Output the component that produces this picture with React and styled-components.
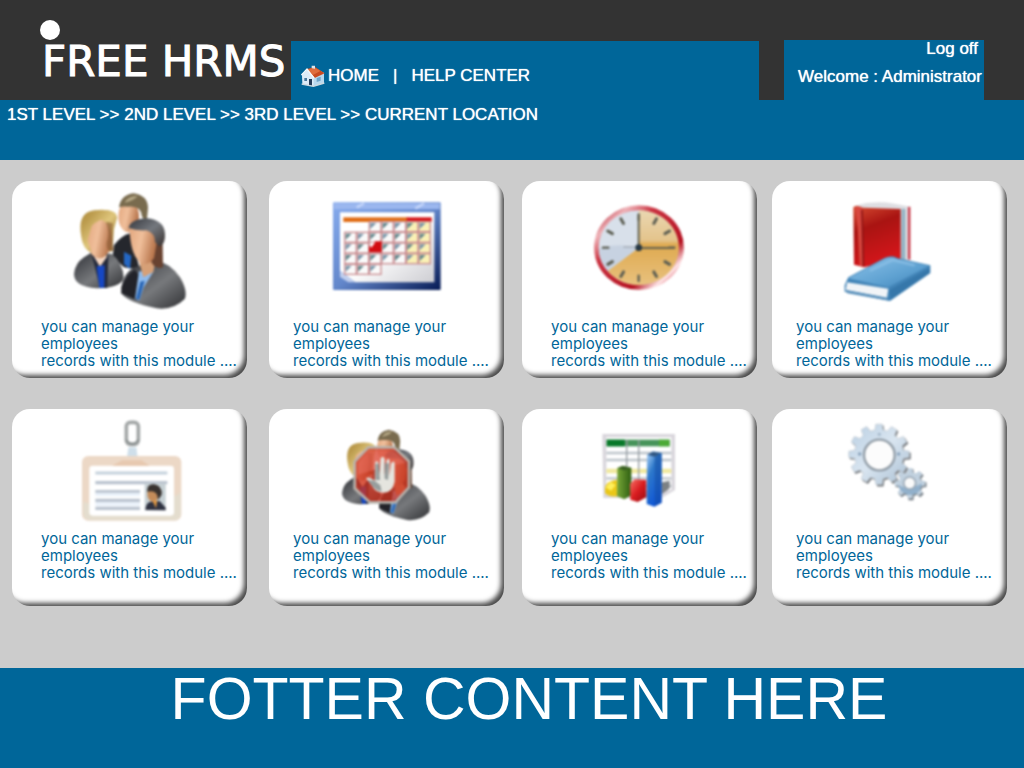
import React from "react";
import styled, { createGlobalStyle } from "styled-components";

const GlobalStyle = createGlobalStyle`
  * { box-sizing: border-box; }
  body {
    margin: 0;
    background: #cccccc;
    font-family: "Liberation Sans", Arial, sans-serif;
    font-size: 17px;
    line-height: 18px;
  }
  a { color: inherit; text-decoration: none; }
`;

const Page = styled.div`
  display: flex;
  flex-direction: column;
  min-height: 100vh;
`;

const Header = styled.header`
  display: flex;
  align-items: flex-end;
  min-height: 100px;
  padding-right: 40px;
  background: #333333;
  color: #ffffff;
`;

const Brand = styled.div`
  align-self: flex-start;
  flex: none;
  width: 291px;
  padding: 20px 0 0 40px;
`;

const BrandDot = styled.div`
  width: 20px;
  height: 20px;
  border-radius: 50%;
  background: #ffffff;
`;

const BrandName = styled.h1`
  margin: 0;
  padding-left: 2px;
  font-family: "DejaVu Sans", sans-serif;
  font-size: 42px;
  font-weight: 400;
  line-height: 44px;
  white-space: nowrap;
  -webkit-text-stroke: 1px #ffffff;
`;

const MainNav = styled.nav`
  display: flex;
  flex: 1;
  align-items: center;
  gap: 14px;
  height: 59px;
  padding: 10px 10px 0;
  background: #006699;
  text-shadow: 0 0 1px #ffffff;
  white-space: nowrap;
`;

const NavLink = styled.a`
  display: flex;
  align-items: center;
  gap: 3px;
`;

const HomeGlyph = styled.svg`
  width: 24px;
  height: 22px;
`;

const UserPanel = styled.div`
  display: flex;
  flex-direction: column;
  align-items: flex-end;
  gap: 10px;
  width: 200px;
  height: 60px;
  margin-left: 25px;
  padding-right: 2px;
  background: #006699;
  text-shadow: 0 0 1px #ffffff;
  white-space: nowrap;
`;

const LogOff = styled.a`
  padding-right: 4px;
`;

const Breadcrumb = styled.nav`
  min-height: 60px;
  padding: 6px 7px;
  background: #006699;
  color: #ffffff;
  text-shadow: 0 0 1px #ffffff;
`;

const Modules = styled.main`
  display: grid;
  flex: 1;
  grid-template-columns: 257fr 253fr 250fr 252fr;
  align-content: start;
  row-gap: 31px;
  padding: 21px 0 31px 12px;
`;

const Card = styled.a`
  display: flex;
  flex-direction: column;
  width: 235px;
  min-height: 197px;
  border-radius: 18px;
  background: #ffffff;
  box-shadow: inset -5px -5px 5px -2px #4a4a4a;
`;

const Picture = styled.svg`
  align-self: center;
  width: 131px;
  height: ${(p) => (p.$tall ? 137 : 121)}px;
  filter: blur(1px);
`;

const Description = styled.p`
  margin: 0;
  padding-left: ${(p) => (p.$wide ? 29 : 24)}px;
  color: #006699;
  font-family: Inter, sans-serif;
  font-size: 15px;
  line-height: 17px;
  white-space: nowrap;
`;

const Footer = styled.footer`
  min-height: 100px;
  padding-left: 34px;
  background: #006699;
  color: #ffffff;
  font-size: 59px;
  line-height: 62px;
  text-align: center;
`;

function HomeIcon() {
  return (
    <HomeGlyph viewBox="902 192 72 66" aria-hidden="true">
      <path d="M906 219 L939 198 L971 216 L971 246 L943 255 L907 250Z" fill="#eef4fa" />
      <path d="M939 228 L971 216 V246 L939 255Z" fill="#b9d8ee" />
      <path d="M905 222 L921 204 L939 228 V255 L907 250Z" fill="#dcebf7" />
      <path d="M920 204 L944 198 L973 217 L943 231Z" fill="#c94a20" />
      <path d="M922 205 L944 200 L960 210 L938 222Z" fill="#df6d3d" />
      <path d="M903 222 L920 204 L942 232" fill="none" stroke="#f7fafc" strokeWidth="4" />
      <path d="M934 202 V194 H944 V203" fill="#dbe3ea" />
      <path d="M926 234 h9 v20 l-9 -1z" fill="#243a58" />
      <path d="M912 231 h8 v9 h-8z" fill="#47789d" />
      <path d="M949 231 l12 -4 v12 l-12 4z" fill="#6fa5c9" />
      <path d="M904 249 L939 256 L972 246" fill="none" stroke="#cbd8df" strokeWidth="4" />
    </HomeGlyph>
  );
}

function PeopleShapes({ id }) {
  return (
    <>
      <defs>
        <linearGradient id={id + "suit"} x1="0" y1="0" x2="1" y2="1">
          <stop offset="0" stopColor="#2b2d33" />
          <stop offset="0.55" stopColor="#77797c" />
          <stop offset="1" stopColor="#303134" />
        </linearGradient>
        <linearGradient id={id + "skin"} x1="0" y1="0" x2="1" y2="0.3">
          <stop offset="0" stopColor="#e2a67d" />
          <stop offset="0.5" stopColor="#f0bf9b" />
          <stop offset="1" stopColor="#b9774e" />
        </linearGradient>
        <linearGradient id={id + "blond"} x1="0" y1="0" x2="1" y2="1">
          <stop offset="0" stopColor="#a78332" />
          <stop offset="0.5" stopColor="#dfc67c" />
          <stop offset="1" stopColor="#8a6626" />
        </linearGradient>
        <linearGradient id={id + "dark"} x1="0" y1="0" x2="1" y2="1">
          <stop offset="0" stopColor="#34363c" />
          <stop offset="0.5" stopColor="#74787e" />
          <stop offset="1" stopColor="#38302d" />
        </linearGradient>
      </defs>
      <path d="M342 225 Q366 195 392 190 L420 300 L372 292 L338 260Z" fill="#25272d" />
      <path d="M372 245 l22 12 -4 40 -18 -14z" fill="#2467c4" />
      <ellipse cx="386" cy="140" rx="31" ry="47" fill={`url(#${id}skin)`} />
      <path d="M357 112 Q362 75 401 70 Q444 77 444 114 L440 157 L426 140 Q424 106 384 110 Q370 108 357 112Z" fill="#796b4e" />
      <path d="M374 98 Q384 76 413 78 Q402 92 374 98Z" fill="#b4a785" />
      <path d="M222 312 Q225 280 252 262 L280 244 L336 252 Q369 280 371 322 Q366 354 290 355 Q222 350 222 312Z" fill={`url(#${id}suit)`} />
      <path d="M276 257 L325 258 L322 354 L300 354Z" fill="#252a3a" />
      <path d="M282 260 L300 290 L321 260 L311 247Z" fill="#f4d7c2" />
      <path d="M290 289 L314 286 L313 353 L298 353Z" fill="#1647c4" />
      <path d="M244 202 Q230 128 282 121 Q340 113 352 142 L342 178 L337 244 L274 250 Q248 235 244 202Z" fill={`url(#${id}blond)`} />
      <ellipse cx="298" cy="207" rx="37" ry="58" fill={`url(#${id}skin)`} />
      <path d="M246 184 Q250 123 326 121 Q354 126 350 145 Q302 139 275 168 L263 211 L275 249 Q249 231 246 184Z" fill={`url(#${id}blond)`} />
      <path d="M338 160 Q334 205 342 241 Q318 249 320 218 Q331 189 318 155Z" fill="#8a5c35" opacity=".65" />
      <path d="M364 352 Q370 310 400 294 L465 270 Q511 279 541 323 Q564 363 554 387 Q520 421 470 415 Q384 398 364 370Z" fill={`url(#${id}suit)`} />
      <path d="M365 350 Q382 311 405 300 L420 321 L411 391 L364 370Z" fill="#222329" />
      <path d="M417 304 L461 304 L431 352 L418 391 L405 386Z" fill="#8fbbed" />
      <path d="M421 335 L434 332 L418 389 L408 386Z" fill="#2b67b5" />
      <path d="M417 273 L468 265 L460 306 L430 322Z" fill="#d6a077" />
      <path d="M456 172 Q488 190 488 221 L489 292 Q463 300 452 271Z" fill="#684230" />
      <path d="M388 166 Q414 151 448 168 L471 212 L462 264 Q444 290 423 278 Q390 258 388 166Z" fill={`url(#${id}skin)`} />
      <path d="M386 174 Q391 148 440 145 Q493 150 495 191 Q497 220 479 230 L465 216 Q466 190 439 181 Q409 183 386 174Z" fill={`url(#${id}dark)`} />
    </>
  );
}

function EmployeesIcon() {
  return (
    <Picture $tall viewBox="192 33 393 411" aria-hidden="true">
      <PeopleShapes id="emp" />
    </Picture>
  );
}

function CalendarIcon() {
  const cells = [];
  for (let row = 0; row < 5; row += 1) {
    for (let col = 0; col < 7; col += 1) {
      if ((row === 0 && col < 2) || (row === 4 && col > 2)) continue;
      cells.push([254 + col * 37, 155 + row * 32, row, col]);
    }
  }
  return (
    <Picture $tall viewBox="183 33 393 411" aria-hidden="true">
      <defs>
        <linearGradient id="calFrame" x1="0" y1="0" x2="1" y2="1">
          <stop offset="0" stopColor="#86abed" />
          <stop offset="0.5" stopColor="#6387cb" />
          <stop offset="1" stopColor="#071b55" />
        </linearGradient>
        <linearGradient id="calPaper" x1="0" y1="0" x2="1" y2="1">
          <stop offset="0.5" stopColor="#ffffff" />
          <stop offset="1" stopColor="#cdcdd2" />
        </linearGradient>
      </defs>
      <rect x="219" y="97" width="323" height="263" rx="3" fill="url(#calFrame)" />
      <path d="M222 100 H539 V118 H222Z" fill="#9bb7ef" />
      <path d="M290 112 l22 -12 M466 116 l26 -16" stroke="#c3d5fa" strokeWidth="8" />
      <path d="M240 127 H523 V337 H286 L240 302Z" fill="url(#calPaper)" />
      <path d="M240 302 L286 337 H265 L240 321Z" fill="#c0ceed" />
      <rect x="250" y="142" width="194" height="14" fill="#e06c15" />
      <rect x="440" y="142" width="75" height="14" fill="#d51518" />
      {cells.map(([x, y, row, col]) => (
        <g key={x + "-" + y}>
          <rect x={x} y={y} width="35" height="30" fill={col > 4 ? "#faf1b5" : "#fafafa"} stroke="#c98d91" strokeWidth="4" />
          <path d={`M${x + 3} ${y + 4} h18 l-18 18z`} fill={(row + col) % 2 ? "#64878c" : "#7895a8"} />
        </g>
      ))}
      <path d="M327 231 L345 214 H365 V247 H327Z" fill="#d20c10" />
      <path d="M329 220 l17 -3 -13 17z" fill="#ffffff" />
    </Picture>
  );
}

function ClockIcon() {
  const ticks = Array.from({ length: 12 }, (_, i) => {
    const a = (i * Math.PI) / 6;
    return [371 + 91 * Math.sin(a), 233 - 84 * Math.cos(a), 371 + 107 * Math.sin(a), 233 - 100 * Math.cos(a)];
  });
  return (
    <Picture $tall viewBox="177 33 393 411" aria-hidden="true">
      <defs>
        <linearGradient id="clockRim" x1="0" y1="0" x2="1" y2="1">
          <stop offset="0.05" stopColor="#a90e20" />
          <stop offset="0.2" stopColor="#efb4b9" />
          <stop offset="0.35" stopColor="#ca3341" />
          <stop offset="0.7" stopColor="#b51222" />
          <stop offset="0.82" stopColor="#ffe7e8" />
          <stop offset="0.92" stopColor="#ca2735" />
        </linearGradient>
        <linearGradient id="clockGold" x1="0" y1="0" x2="0" y2="1">
          <stop offset="0" stopColor="#ead7b1" />
          <stop offset="0.4" stopColor="#e4c48c" />
          <stop offset="0.46" stopColor="#dfaa50" />
          <stop offset="1" stopColor="#e8c17e" />
        </linearGradient>
      </defs>
      <ellipse cx="372" cy="233" rx="135" ry="127" fill="url(#clockRim)" />
      <ellipse cx="371" cy="233" rx="120" ry="112" fill="#d8e0ea" />
      <path d="M371 233 V121 A120 112 0 1 1 278 303Z" fill="url(#clockGold)" />
      <path d="M252 235 Q310 217 371 233 L278 303 Q251 276 252 235Z" fill="#bfcbdc" opacity=".65" />
      {ticks.map(([x1, y1, x2, y2], i) => (
        <line key={i} x1={x1} y1={y1} x2={x2} y2={y2} stroke="#5c5e52" strokeWidth={i % 3 ? 9 : 7} strokeLinecap="round" />
      ))}
      <path d="M371 137 V234 H477" fill="none" stroke="#64624e" strokeWidth="6" />
      <path d="M325 231 H371" stroke="#a4abb4" strokeWidth="4" />
      <circle cx="371" cy="233" r="10" fill="#253744" />
    </Picture>
  );
}

function BooksIcon() {
  return (
    <Picture $tall viewBox="177 33 393 411" aria-hidden="true">
      <defs>
        <linearGradient id="bookRed" x1="0" y1="0" x2="0.3" y2="1">
          <stop offset="0" stopColor="#d64c31" />
          <stop offset="0.4" stopColor="#a91412" />
          <stop offset="1" stopColor="#d4161b" />
        </linearGradient>
        <linearGradient id="bookBlue" x1="0" y1="0" x2="1" y2="1">
          <stop offset="0" stopColor="#8cc2e9" />
          <stop offset="0.6" stopColor="#5ea1d1" />
          <stop offset="1" stopColor="#3e80b5" />
        </linearGradient>
      </defs>
      <path d="M268 107 Q330 90 388 101 L436 110 V270 L405 279 L285 126Z" fill="#dedee2" />
      <path d="M410 116 L421 117 V275 L408 276Z" fill="#92b2c3" />
      <path d="M429 111 L436 110 V270 L429 267Z" fill="#ca3545" />
      <path d="M265 112 Q274 104 294 113 L407 117 V268 L297 292 L267 284Z" fill="url(#bookRed)" />
      <path d="M270 112 Q281 107 292 115 L296 289 L284 288 L278 171Z" fill="#d8473f" />
      <path d="M291 119 L295 289" stroke="#8d1516" strokeWidth="5" />
      <path d="M239 345 L250 322 L358 264 Q382 254 397 264 L496 286 V309 L375 393 L239 365Z" fill="#4284b7" />
      <path d="M250 325 L358 266 Q377 258 396 266 L492 287 L370 352Z" fill="url(#bookBlue)" />
      <path d="M246 337 L370 356 L366 383 L242 360Z" fill="#f1f4f7" />
      <path d="M240 359 L363 384 L372 392 L247 370Z" fill="#5b91bb" />
      <path d="M374 360 L494 294 V310 L376 389Z" fill="#3677aa" />
      <path d="M315 302 L383 270 L449 286" fill="none" stroke="#a4d0ef" strokeWidth="8" opacity=".4" />
    </Picture>
  );
}

function BadgeIcon() {
  return (
    <Picture viewBox="192 27 393 363" aria-hidden="true">
      <rect x="379" y="67" width="36" height="66" rx="12" fill="#ffffff" stroke="#a3a7a7" strokeWidth="11" />
      <path d="M379 120 Q397 143 415 120" fill="none" stroke="#868c8c" strokeWidth="5" />
      <path d="M385 142 h24 l4 31 h-32z" fill="#cfdfea" />
      <rect x="246" y="168" width="298" height="194" rx="19" fill="#ecd8c6" />
      <path d="M250 305 Q400 360 542 278 V344 Q538 360 523 360 H264 Q250 355 250 338Z" fill="#e2dfd0" opacity=".75" />
      <rect x="268" y="197" width="254" height="150" rx="10" fill="#ffffff" />
      <path d="M336 198 L366 181 H425 L449 198Z" fill="#e7c9b0" />
      <path d="M286 219 H502" stroke="#c5d2dc" strokeWidth="9" />
      <path d="M286 248 H502 M286 275 H420 M286 301 H420 M286 325 H420" stroke="#bac3cf" strokeWidth="10" />
      <path d="M286 283 H420 M286 312 H420" stroke="#e9f1fa" strokeWidth="10" />
      <rect x="434" y="250" width="63" height="81" fill="#c6d0d4" />
      <path d="M436 330 Q438 303 460 305 L479 303 L497 323 V331Z" fill="#303342" />
      <ellipse cx="459" cy="281" rx="17" ry="25" fill="#c48c5a" />
      <path d="M441 275 Q441 250 463 253 Q487 257 485 284 L474 301 Q475 268 441 275Z" fill="#38322f" />
      <path d="M458 303 l13 -2 -3 24z" fill="#e59b43" />
    </Picture>
  );
}

function BlockedIcon() {
  return (
    <Picture viewBox="183 27 393 363" aria-hidden="true">
      <g transform="translate(72 34) scale(.785)">
        <PeopleShapes id="blk" />
      </g>
      <path d="M325 142 H403 L447 184 V262 L406 307 H329 L284 265 V185Z" fill="#d0331f" fillOpacity=".76" stroke="#b8b2ab" strokeWidth="8" />
      <path d="M326 151 H400 L438 188 Q370 200 294 224 V189Z" fill="#ef7f72" opacity=".38" />
      <path d="M318 235 Q324 227 344 242 L345 191 Q348 176 356 190 L358 226 L362 175 Q369 164 374 177 V225 L380 181 Q388 170 389 185 V228 L393 191 Q402 178 404 192 V245 Q397 278 371 278 Q346 278 336 257Z" fill="#e5e5df" />
      <path d="M344 242 L361 256 L365 274 Q348 272 336 257 L323 240Z M374 190 V236 L384 240 L388 190Z M346 192 L356 190 L360 240 L346 240Z" fill="#7c8587" opacity=".75" />
    </Picture>
  );
}

function ReportIcon() {
  return (
    <Picture viewBox="177 27 393 363" aria-hidden="true">
      <defs>
        <linearGradient id="barGreen" x1="0" y1="0" x2="1" y2="0">
          <stop offset="0" stopColor="#78a738" />
          <stop offset="1" stopColor="#2d5d10" />
        </linearGradient>
        <linearGradient id="barBlue" x1="0" y1="0" x2="0.6" y2="1">
          <stop offset="0" stopColor="#b7dafa" />
          <stop offset="0.4" stopColor="#2e79cb" />
          <stop offset="1" stopColor="#0b51d6" />
        </linearGradient>
        <linearGradient id="barRed" x1="0" y1="0" x2="1" y2="1">
          <stop offset="0" stopColor="#f57467" />
          <stop offset="0.5" stopColor="#d91c20" />
          <stop offset="1" stopColor="#960c12" />
        </linearGradient>
      </defs>
      <path d="M262 102 H480 V270 L440 294 H265Z" fill="#d9d6dc" />
      <path d="M274 112 H469 V270 H274Z" fill="#ffffff" />
      <rect x="275" y="119" width="189" height="20" fill="#47945a" />
      <rect x="275" y="119" width="54" height="20" fill="#087929" />
      <path d="M432 119 h32 v20 h-32z" fill="#4caa36" />
      <path d="M274 159 H469 M274 180 H469 M274 235 H469 M274 258 H469" stroke="#bdc4ca" strokeWidth="7" />
      <path d="M274 213 H469" stroke="#f0e99f" strokeWidth="14" />
      <path d="M335 119 V270 M371 119 V270" stroke="#949ba0" strokeWidth="4" />
      <path d="M270 263 Q275 242 306 239 V289 Q285 292 270 280Z" fill="#eac719" />
      <path d="M272 262 L287 246 L302 255 L288 272Z" fill="#fff05c" />
      <path d="M307 204 L323 197 L349 203 V286 L328 298 L306 289Z" fill="url(#barGreen)" />
      <path d="M308 204 L324 198 L347 204 L328 211Z" fill="#375d22" />
      <path d="M345 251 L359 238 L394 240 V292 L368 306 L346 299Z" fill="url(#barRed)" />
      <path d="M441 247 L464 242 V265 L441 282Z" fill="#7c8184" />
      <path d="M396 164 L414 154 L440 159 V308 L418 320 L395 312Z" fill="url(#barBlue)" />
      <path d="M419 170 L440 159 V308 L419 319Z" fill="#174f9f" opacity=".5" />
      <path d="M397 164 L414 155 L438 160 L419 170Z" fill="#315782" />
    </Picture>
  );
}

function gearPath(cx, cy, outer, inner, teeth) {
  const step = (Math.PI * 2) / teeth;
  const points = [];
  for (let i = 0; i < teeth; i += 1) {
    const base = i * step - Math.PI / 2;
    [[-0.32, inner], [-0.2, outer], [0.2, outer], [0.32, inner]].forEach(([f, r]) => {
      points.push(`${cx + r * Math.cos(base + f * step)} ${cy + r * Math.sin(base + f * step)}`);
    });
  }
  return `M${points.join(" L")}Z`;
}

function GearsIcon() {
  return (
    <Picture viewBox="177 27 393 363" aria-hidden="true">
      <defs>
        <linearGradient id="gearSteel" x1="0" y1="0" x2="1" y2="1">
          <stop offset="0" stopColor="#b9cfe3" />
          <stop offset="0.5" stopColor="#d9e5f0" />
          <stop offset="1" stopColor="#a9bfd3" />
        </linearGradient>
      </defs>
      <path d={gearPath(346, 168, 92, 74, 12)} fill="#75797d" />
      <path d={gearPath(342, 163, 91, 74, 12)} fill="url(#gearSteel)" stroke="#bec6cd" strokeWidth="2" />
      <circle cx="343" cy="165" r="46" fill="#fcfcfc" stroke="#929da7" strokeWidth="7" />
      <circle cx="284" cy="162" r="5" fill="#859fb8" />
      <circle cx="401" cy="162" r="5" fill="#859fb8" />
      <circle cx="343" cy="103" r="5" fill="#a5b9cb" />
      <path d={gearPath(438, 254, 47, 35, 8)} fill="#747c83" />
      <path d={gearPath(435, 250, 46, 34, 8)} fill="#c1d1df" />
      <path d="M399 255 Q430 273 471 250 Q468 284 437 285 Q407 284 399 255Z" fill="#91b0cb" />
      <circle cx="434" cy="249" r="18" fill="#fafafa" stroke="#9aa8b5" strokeWidth="5" />
    </Picture>
  );
}

const modules = [
  { key: "employees", Icon: EmployeesIcon, wide: true },
  { key: "calendar", Icon: CalendarIcon, wide: false },
  { key: "time", Icon: ClockIcon, wide: true },
  { key: "library", Icon: BooksIcon, wide: false },
  { key: "badges", Icon: BadgeIcon, wide: true },
  { key: "blocked", Icon: BlockedIcon, wide: false },
  { key: "reports", Icon: ReportIcon, wide: true },
  { key: "settings", Icon: GearsIcon, wide: false },
];

export default function App() {
  return (
    <Page>
      <GlobalStyle />
      <Header>
        <Brand>
          <BrandDot />
          <BrandName>FREE HRMS</BrandName>
        </Brand>
        <MainNav>
          <NavLink href="#home">
            <HomeIcon />
            HOME
          </NavLink>
          <span>|</span>
          <NavLink href="#help">HELP CENTER</NavLink>
        </MainNav>
        <UserPanel>
          <LogOff href="#logoff">Log off</LogOff>
          <span>Welcome : Administrator</span>
        </UserPanel>
      </Header>
      <Breadcrumb>
        <a href="#level-1">1ST LEVEL</a> &gt;&gt; <a href="#level-2">2ND LEVEL</a> &gt;&gt;{" "}
        <a href="#level-3">3RD LEVEL</a> &gt;&gt; <span>CURRENT LOCATION</span>
      </Breadcrumb>
      <Modules>
        {modules.map(({ key, Icon, wide }) => (
          <Card key={key} href={"#" + key}>
            <Icon />
            <Description $wide={wide}>
              you can manage your
              <br />
              employees
              <br />
              records with this module ....
            </Description>
          </Card>
        ))}
      </Modules>
      <Footer>FOTTER CONTENT HERE</Footer>
    </Page>
  );
}
